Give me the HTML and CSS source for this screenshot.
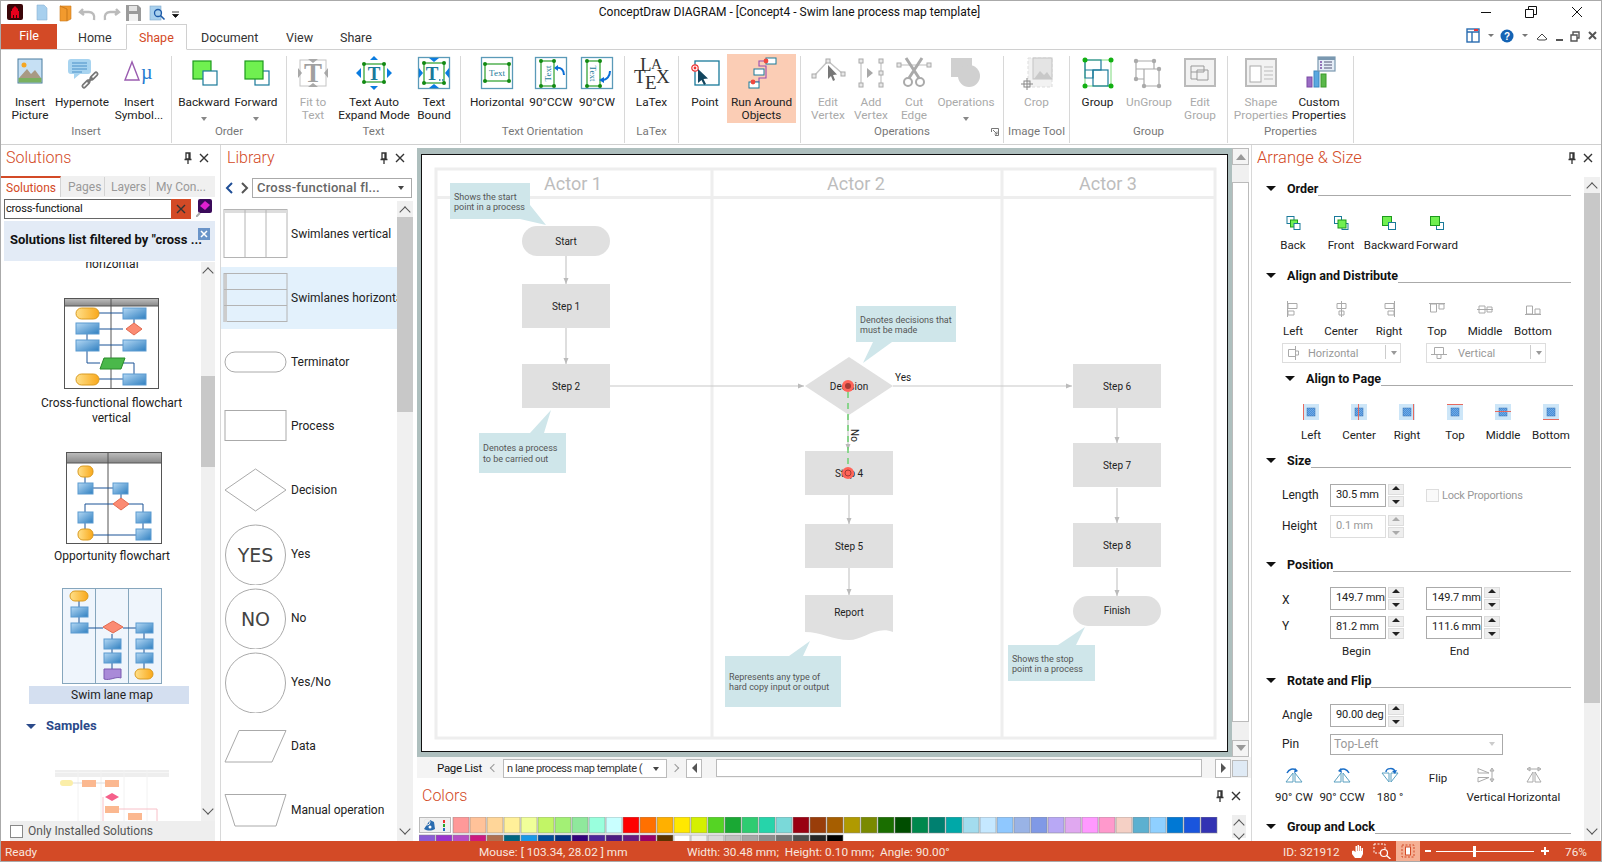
FILE: index.html
```html
<!DOCTYPE html>
<html>
<head>
    <title>ConceptDraw DIAGRAM</title>
    <link rel="stylesheet" href="styles.css">
</head>
<body>
<!-- shared icon parts -->
<svg class="defs" width="0" height="0">
    <defs>
        <linearGradient id="gBlue" x1="0" y1="0" x2="1" y2="1"><stop offset="0" stop-color="#b4d8f4"/><stop offset="1" stop-color="#2f7fc0"/></linearGradient>
        <linearGradient id="gPill" x1="0" y1="0" x2="1" y2="0"><stop offset="0" stop-color="#ffe08a"/><stop offset="1" stop-color="#f9a81a"/></linearGradient>
        <linearGradient id="gHead" x1="0" y1="0" x2="0" y2="1"><stop offset="0" stop-color="#bbb"/><stop offset="1" stop-color="#888"/></linearGradient>
        <pattern id="hatch" width="2" height="2" patternUnits="userSpaceOnUse"><rect width="2" height="2" fill="#4a90d9"/><path d="M0 2l2-2" stroke="#8cbcec" stroke-width=".6"/></pattern>
        <symbol id="pin" viewBox="0 0 10 12"><path d="M3 1h4v6H3zM1.500 7.500h7M5 8v4M6 1v6" fill="none" stroke="#333" stroke-width="1.300"/></symbol>
        <symbol id="cross" viewBox="0 0 10 10"><path d="M1 1l8 8M9 1l-8 8" fill="none" stroke="#333" stroke-width="1.400"/></symbol>
        <symbol id="alignbox" viewBox="0 0 16 16"><rect width="16" height="16" fill="#cde6f8"/><rect x="4" y="4" width="8" height="8" fill="url(#hatch)" stroke="#3a70b0" stroke-width=".5"/></symbol>
    </defs>
</svg>

<div class="app">
    <!-- Title bar -->
    <div class="titlebar">
        <div class="qat">
            <svg width="180" height="20" viewBox="0 0 180 20">
                <rect x="6" y="1" width="16" height="16" rx="2" fill="#3a0508"/>
                <path d="M14 3l3 3v2h1v7h-2v-3h-1v3h-2v-3h-1v3h-2V8h1V6z" fill="#e8001c"/>
                <path d="M36 2h7l3 3v12H36z" fill="#a8d0ee" stroke="#8ab4d4" stroke-width=".6"/>
                <path d="M59 3h11v13l-4 2V6l-7-3zM59 3l7 3v12h-7z" fill="#f29a2e" stroke="#c9781c" stroke-width=".6"/>
                <path d="M82 6l-3 3 4 3M80 9h8c4 0 6 3 5 8" fill="none" stroke="#bbb" stroke-width="2.400"/>
                <path d="M115 6l3 3-4 3M117 9h-8c-4 0-6 3-5 8" fill="none" stroke="#bbb" stroke-width="2.400"/>
                <path d="M125 2h12l3 3v13h-15z" fill="#9b9b9b"/><rect x="128" y="3" width="8" height="5" fill="#e4e4e4"/><rect x="128" y="11" width="9" height="7" fill="#f2f2f2"/>
                <rect x="149" y="3" width="11" height="14" fill="#a8d0ee" stroke="#7fa9c9" stroke-width=".6"/><circle cx="157" cy="10" r="3.500" fill="none" stroke="#1c5aa8" stroke-width="1.300"/><path d="M159.500 12.500l4 4" stroke="#1c5aa8" stroke-width="1.600"/>
                <path d="M171 9h7M171.500 11.500h6l-3 3z" fill="#111" stroke="#111" stroke-width=".8"/>
            </svg>
        </div>
        <div class="doc-title">ConceptDraw DIAGRAM - [Concept4 - Swim lane process map template]</div>
        <div class="winctl">
            <svg width="120" height="20" viewBox="0 0 120 20">
                <path d="M0 9.500h10" stroke="#111"/>
                <path d="M44.500 6.500h8v8h-8zM47.500 6V3.500h8v8h-3" fill="none" stroke="#111"/>
                <path d="M91 4l10 10M101 4L91 14" stroke="#111"/>
            </svg>
        </div>
    </div>

    <!-- Ribbon tabs -->
    <div class="tabs">
        <div class="tab file">File</div>
        <div class="tab t-home">Home</div>
        <div class="tab active">Shape</div>
        <div class="tab t-doc">Document</div>
        <div class="tab t-view">View</div>
        <div class="tab">Share</div>
        <div class="tabs-right">
            <svg width="136" height="20" viewBox="0 0 136 20">
                <rect x="1" y="3" width="12" height="13" fill="#fff" stroke="#2a6cb0" stroke-width="1.400"/><path d="M1 6h12M6 6v10" stroke="#2a6cb0" stroke-width="1.400"/><rect x="8" y="3" width="4" height="2" fill="#e33"/>
                <path d="M22 8h6l-3 3z" fill="#777"/>
                <circle cx="41" cy="10" r="6.500" fill="#1463b4"/>
                <path d="M56 8h6l-3 3z" fill="#777"/>
                <path d="M71 13l5-5 5 5-2 1h-6z" fill="none" stroke="#444"/>
                <path d="M90 14h7" stroke="#555" stroke-width="2"/>
                <path d="M105 9h6v6h-6zM107 9V6h6v6h-2" fill="none" stroke="#555" stroke-width="1.400"/>
                <path d="M123 6l7 7M130 6l-7 7" stroke="#555" stroke-width="2"/>
                <text class="help-mark" x="41" y="14">?</text>
            </svg>
        </div>
    </div>

    <!-- Ribbon -->
    <div class="ribbon">
        <div class="rgroup g-insert">
            <div class="rbtns">
                <div class="rbtn">
                    <svg class="ricon" viewBox="0 0 36 32"><rect x="6" y="2" width="24" height="24" fill="#c6e0f4" stroke="#4a7ca0"/><circle cx="12" cy="8" r="2.500" fill="#f5a623"/><path d="M7 21l8-9 4 5 4-4 6 8z" fill="#a89a84"/><rect x="6.500" y="21" width="23" height="4.500" fill="#7ab060"/></svg>
                    <span>Insert<br>Picture</span>
                </div>
                <div class="rbtn">
                    <svg class="ricon" viewBox="0 0 36 32"><path d="M7 2h17a3 3 0 0 1 3 3v9a3 3 0 0 1-3 3H16l-6 5v-5H7a3 3 0 0 1-3-3V5a3 3 0 0 1 3-3z" fill="#a8d4f0"/><path d="M8 6h15M8 9h15M8 12h15M8 15h10" stroke="#4a90c8"/><path d="M20 29l4-4M28 21l4-4" stroke="#777" stroke-width="5" stroke-linecap="round"/><path d="M20 29l4-4M28 21l4-4" stroke="#fff" stroke-width="1.600" stroke-linecap="round"/><path d="M23.500 25.500l5-5" stroke="#777" stroke-width="2.600"/></svg>
                    <span>Hypernote</span>
                </div>
                <div class="rbtn">
                    <svg class="ricon" viewBox="0 0 36 32"><path d="M11 5L4 23h14z" fill="none" stroke="#9a5cb0" stroke-width="1.400"/><text class="sym-mu" x="20" y="22">µ</text></svg>
                    <span>Insert<br>Symbol...</span>
                </div>
            </div>
            <div class="rlabel">Insert</div>
        </div>
        <div class="rgroup g-order">
            <div class="rbtns">
                <div class="rbtn has-drop">
                    <svg class="ricon" viewBox="0 0 36 32"><rect x="7" y="4" width="18" height="18" fill="#70f050" stroke="#1d9a1d" stroke-width="1.200"/><rect x="17" y="14" width="14" height="14" fill="#fff" stroke="#1a7a9a" stroke-width="1.200"/></svg>
                    <span>Backward</span><i class="drop"></i>
                </div>
                <div class="rbtn has-drop">
                    <svg class="ricon" viewBox="0 0 36 32"><rect x="17" y="14" width="14" height="14" fill="#fff" stroke="#1a7a9a" stroke-width="1.200"/><rect x="7" y="4" width="18" height="18" fill="#70f050" stroke="#1d9a1d" stroke-width="1.200"/></svg>
                    <span>Forward</span><i class="drop"></i>
                </div>
            </div>
            <div class="rlabel">Order</div>
        </div>
        <div class="rgroup g-text">
            <div class="rbtns">
                <div class="rbtn off">
                    <svg class="ricon" viewBox="0 0 36 32"><rect x="5" y="3" width="26" height="26" fill="none" stroke="#c4c4c4"/><path d="M13 2h10l-5 4zM13 30h10l-5-4zM3 11v10l4-5zM33 11v10l-4-5z" fill="#a8a8a8"/><text class="t-big gray" x="18" y="25">T</text></svg>
                    <span>Fit to<br>Text</span>
                </div>
                <div class="rbtn">
                    <svg class="ricon" viewBox="0 0 36 32"><rect x="8" y="7" width="20" height="18" fill="none" stroke="#3aa63a" stroke-width="1.300"/><path d="M14 3h8l-4-4zM14 29h8l-4 4zM5 11v10l-5-5zM31 11v10l5-5z" fill="#0a7ce0"/><g fill="#128a12"><circle cx="8" cy="7" r="2"/><circle cx="28" cy="7" r="2"/><circle cx="8" cy="25" r="2"/><circle cx="28" cy="25" r="2"/></g><text class="t-mid" x="18" y="23">T</text></svg>
                    <span>Text Auto<br>Expand Mode</span>
                </div>
                <div class="rbtn">
                    <svg class="ricon" viewBox="0 0 36 32"><rect x="2.500" y=".5" width="31" height="31" fill="none" stroke="#5a9ab8" stroke-width="1.300"/><rect x="8" y="6" width="20" height="20" fill="none" stroke="#3aa63a" stroke-width="1.300"/><path d="M13 1h10l-5 4zM13 31h10l-5-4zM3 11v10l4-5zM33 11v10l-4-5z" fill="#0a7ce0"/><g fill="#128a12"><circle cx="8" cy="6" r="2"/><circle cx="28" cy="6" r="2"/><circle cx="8" cy="26" r="2"/><circle cx="28" cy="26" r="2"/></g><text class="t-mid" x="16" y="23">T</text><path d="M23 23h1.500M26 23h1.500" stroke="#1a7a9a" stroke-width="1.500"/></svg>
                    <span>Text<br>Bound</span>
                </div>
            </div>
            <div class="rlabel">Text</div>
        </div>
        <div class="rgroup g-orient">
            <div class="rbtns">
                <div class="rbtn">
                    <svg class="ricon" viewBox="0 0 36 32"><rect x="2.500" y=".5" width="31" height="31" fill="none" stroke="#5a9ab8" stroke-width="1.300"/><rect x="6" y="7" width="24" height="17" fill="none" stroke="#3aa63a" stroke-width="1.300"/><g fill="#128a12"><circle cx="6" cy="7" r="2"/><circle cx="30" cy="7" r="2"/><circle cx="6" cy="24" r="2"/><circle cx="30" cy="24" r="2"/></g><text class="t-txt" x="18" y="19">Text</text></svg>
                    <span>Horizontal</span>
                </div>
                <div class="rbtn">
                    <svg class="ricon" viewBox="0 0 36 32"><rect x="2.500" y=".5" width="31" height="31" fill="none" stroke="#5a9ab8" stroke-width="1.300"/><rect x="8" y="4" width="13" height="25" fill="none" stroke="#3aa63a" stroke-width="1.300"/><g fill="#128a12"><circle cx="8" cy="4" r="2"/><circle cx="21" cy="4" r="2"/><circle cx="8" cy="29" r="2"/><circle cx="21" cy="29" r="2"/></g><text class="t-txt" transform="translate(18 16.500) rotate(-90)">Text</text><path d="M23 11c5-1 8 2 8 7" fill="none" stroke="#0a6ed8" stroke-width="2"/><path d="M21 11l4-3v6z" fill="#0a6ed8"/></svg>
                    <span>90°CCW</span>
                </div>
                <div class="rbtn">
                    <svg class="ricon" viewBox="0 0 36 32"><rect x="2.500" y=".5" width="31" height="31" fill="none" stroke="#5a9ab8" stroke-width="1.300"/><rect x="8" y="4" width="13" height="25" fill="none" stroke="#3aa63a" stroke-width="1.300"/><g fill="#128a12"><circle cx="8" cy="4" r="2"/><circle cx="21" cy="4" r="2"/><circle cx="8" cy="29" r="2"/><circle cx="21" cy="29" r="2"/></g><text class="t-txt" transform="translate(11 16.500) rotate(90)">Text</text><path d="M31 14c0 5-3 9-8 9" fill="none" stroke="#0a6ed8" stroke-width="2"/><path d="M20 23l5-3v6z" fill="#0a6ed8"/></svg>
                    <span>90°CW</span>
                </div>
            </div>
            <div class="rlabel">Text Orientation</div>
        </div>
        <div class="rgroup g-latex">
            <div class="rbtns">
                <div class="rbtn">
                    <svg class="ricon" viewBox="0 0 36 32"><text class="tex" x="6" y="14">L</text><text class="tex small" x="17" y="12">A</text><text class="tex" x="0" y="26">T</text><text class="tex" x="11" y="32">E</text><text class="tex" x="22" y="26">X</text></svg>
                    <span>LaTex</span>
                </div>
            </div>
            <div class="rlabel">LaTex</div>
        </div>
        <div class="rgroup g-arrow">
            <div class="rbtns">
                <div class="rbtn">
                    <svg class="ricon" viewBox="0 0 36 32"><rect x="8" y="4" width="24" height="24" fill="none" stroke="#1a7a9a" stroke-width="1.300"/><circle cx="8" cy="11" r="3.200" fill="#fff" stroke="#e33" stroke-width="1.200"/><circle cx="8" cy="11" r="1.400" fill="#e33"/><path d="M11 12v14l3.500-3 2.500 5 2-1-2.500-5 4.500-.5z" fill="#12455e"/></svg>
                    <span>Point</span>
                </div>
                <div class="rbtn selected">
                    <svg class="ricon" viewBox="0 0 36 32"><path d="M22 4h-7v5h7v12h-7v4H9" fill="none" stroke="#9a4cb0" stroke-width="1.100"/><rect x="22" y="1" width="10" height="6" fill="#fff" stroke="#1a7a9a"/><rect x="10" y="12" width="10" height="6" fill="#fff" stroke="#1a7a9a"/><rect x="5" y="25" width="10" height="6" fill="#fff" stroke="#1a7a9a"/><circle cx="22" cy="4" r="2.400" fill="#f0483e"/><circle cx="9" cy="25" r="2.400" fill="#f0483e"/></svg>
                    <span>Run Around<br>Objects</span>
                </div>
            </div>
            <div class="rlabel"></div>
        </div>
        <div class="rgroup g-ops">
            <div class="rbtns">
                <div class="rbtn off">
                    <svg class="ricon" viewBox="0 0 36 32"><path d="M4 19L18 4l15 13" fill="none" stroke="#c4c4c4" stroke-width="1.400"/><g fill="#e8e8e8" stroke="#aaa"><rect x="2" y="17" width="4" height="4"/><rect x="16" y="2" width="4" height="4"/><rect x="31" y="15" width="4" height="4"/></g><path d="M18 8v14l3-3 2 5 2-1-2-5 4-.5z" fill="#777"/></svg>
                    <span>Edit<br>Vertex</span>
                </div>
                <div class="rbtn off">
                    <svg class="ricon" viewBox="0 0 36 32"><path d="M8 4v24M28 4v24" stroke="#ccc" stroke-width="1.400"/><g fill="#e8e8e8" stroke="#aaa"><rect x="6" y="2" width="4" height="4"/><rect x="6" y="26" width="4" height="4"/><rect x="26" y="2" width="4" height="4"/><rect x="26" y="14" width="4" height="4"/><rect x="26" y="26" width="4" height="4"/></g><path d="M14 11v10l6-5z" fill="#a8a8a8"/></svg>
                    <span>Add<br>Vertex</span>
                </div>
                <div class="rbtn off">
                    <svg class="ricon" viewBox="0 0 36 32"><path d="M3 8h30" stroke="#bbb"/><g fill="#e8e8e8" stroke="#aaa"><rect x="1" y="6" width="4" height="4"/><rect x="31" y="6" width="4" height="4"/></g><path d="M10 1l13 20M26 1L13 21" stroke="#aaa" stroke-width="3"/><circle cx="12" cy="25" r="4" fill="none" stroke="#aaa" stroke-width="2"/><circle cx="24" cy="25" r="4" fill="none" stroke="#aaa" stroke-width="2"/></svg>
                    <span>Cut<br>Edge</span>
                </div>
                <div class="rbtn off has-drop">
                    <svg class="ricon" viewBox="0 0 36 32"><path d="M3 1h21v11H3z" fill="#d0d0d0"/><circle cx="21" cy="19" r="11" fill="#d0d0d0"/><path d="M3 12h12v8H3z" fill="#d0d0d0"/></svg>
                    <span>Operations</span><i class="drop"></i>
                </div>
            </div>
            <div class="rlabel">Operations</div>
            <svg class="launcher" width="8" height="8" viewBox="0 0 8 8"><path d="M.5 4V.5H7.500V7.500H4M2 2l4 4M6 3.500V6H3.500" fill="none" stroke="#777"/></svg>
        </div>
        <div class="rgroup g-image">
            <div class="rbtns">
                <div class="rbtn off">
                    <svg class="ricon" viewBox="0 0 36 32"><rect x="9" y="1" width="24" height="29" fill="#f2f2f2" stroke="#ddd" stroke-dasharray="3 2"/><rect x="14" y="1" width="19" height="21" fill="#e4e4e4" stroke="#c4c4c4"/><path d="M15 22l6-8 4 4 3-3 5 7z" fill="#c8c8c8"/><rect x="5" y="24" width="6" height="6" fill="none" stroke="#888"/><path d="M8 21v12M2 27h12" stroke="#888"/></svg>
                    <span>Crop</span>
                </div>
            </div>
            <div class="rlabel">Image Tool</div>
        </div>
        <div class="rgroup g-group">
            <div class="rbtns">
                <div class="rbtn">
                    <svg class="ricon" viewBox="0 0 36 32"><rect x="5" y="3" width="26" height="26" fill="none" stroke="#7cd97c"/><path d="M5 3h16v10H5zM5 13h8v8H5z" fill="none" stroke="#1a7a9a" stroke-width="1.200"/><rect x="13" y="13" width="15" height="16" fill="none" stroke="#1a7a9a" stroke-width="1.200"/><g fill="#12b012"><circle cx="5" cy="3" r="2.500"/><circle cx="31" cy="3" r="2.500"/><circle cx="5" cy="29" r="2.500"/><circle cx="31" cy="29" r="2.500"/></g></svg>
                    <span>Group</span>
                </div>
                <div class="rbtn off">
                    <svg class="ricon" viewBox="0 0 36 32"><path d="M5 4h18v8H5zM5 12v10h8M13 12h15v17H13z" fill="none" stroke="#aaa" stroke-width="1.200"/><g fill="#aaa"><circle cx="5" cy="4" r="2.200"/><circle cx="23" cy="4" r="2.200"/><circle cx="5" cy="22" r="2.200"/><circle cx="28" cy="12" r="2.200"/><circle cx="13" cy="29" r="2.200"/><circle cx="28" cy="29" r="2.200"/></g></svg>
                    <span>UnGroup</span>
                </div>
                <div class="rbtn off">
                    <svg class="ricon" viewBox="0 0 36 32"><rect x="3" y="2" width="30" height="27" fill="#f2f2f2" stroke="#bbb" stroke-width="2"/><path d="M9 9h13v6H9zM9 15v7h6M15 13h11v10H15z" fill="none" stroke="#999"/></svg>
                    <span>Edit<br>Group</span>
                </div>
            </div>
            <div class="rlabel">Group</div>
        </div>
        <div class="rgroup g-props">
            <div class="rbtns">
                <div class="rbtn off">
                    <svg class="ricon" viewBox="0 0 36 32"><rect x="3" y="2" width="30" height="27" fill="#f2f2f2" stroke="#bbb" stroke-width="2"/><rect x="7" y="9" width="11" height="16" fill="#fff" stroke="#aaa"/><path d="M21 10h9M21 14h9M21 18h9M21 22h9" stroke="#bbb"/></svg>
                    <span>Shape<br>Properties</span>
                </div>
                <div class="rbtn">
                    <svg class="ricon" viewBox="0 0 36 32"><rect x="6" y="20" width="5" height="10" fill="#9b6cc4" stroke="#7a4aa4"/><rect x="13" y="14" width="5" height="16" fill="#5aa8e0" stroke="#3a88c0"/><rect x="20" y="17" width="5" height="13" fill="#5ab84a" stroke="#3a9a2a"/><rect x="17" y="0" width="17" height="14" fill="#e4ecf6" stroke="#7a98b0" stroke-width="1.200"/><rect x="17" y="0" width="17" height="3" fill="#7a98b0"/><path d="M19 5h2M19 8h2M19 11h2" stroke="#7a4aa4" stroke-width="1.500"/><path d="M23 5h8M23 8h8M23 11h8" stroke="#557"/></svg>
                    <span>Custom<br>Properties</span>
                </div>
            </div>
            <div class="rlabel">Properties</div>
        </div>
    </div>

    <!-- Main work area -->
    <div class="main">
        <!-- Solutions panel -->
        <div class="panel solutions">
            <div class="panel-head">
                <span class="panel-title">Solutions</span>
                <svg class="pin" width="10" height="12"><use href="#pin"/></svg>
                <svg class="close" width="10" height="10"><use href="#cross"/></svg>
            </div>
            <div class="side-tabs">
                <div class="side-tab active">Solutions</div>
                <div class="side-tab t-pages">Pages</div>
                <div class="side-tab t-layers">Layers</div>
                <div class="side-tab last">My Con...</div>
            </div>
            <div class="search">
                <div class="search-box">cross-functional</div>
                <div class="search-clear"><svg width="10" height="10"><use href="#cross"/></svg></div>
                <svg class="search-go" width="16" height="18" viewBox="0 0 16 18"><rect x="2" y="0" width="14" height="14" rx="2" fill="#3a0a5a"/><path d="M9 2l5 4-5 5-5-4z" fill="#e020d0"/><path d="M0 18l4-4" stroke="#aaa" stroke-width="2"/></svg>
            </div>
            <div class="banner">
                <span>Solutions list filtered by "cross ...</span>
                <svg class="banner-x" width="12" height="12" viewBox="0 0 12 12"><rect width="12" height="12" fill="#6a94c8"/><path d="M3 3l6 6M9 3l-6 6" stroke="#fff" stroke-width="1.500"/></svg>
            </div>
            <div class="sol-body">
                <div class="sol-list">
                    <div class="sol-cut">horizontal</div>
                    <svg class="thumb t1" width="96" height="92" viewBox="0 0 96 92">
                        <rect x=".5" y=".5" width="94" height="90" fill="#fff" stroke="#555"/><rect x="1" y="1" width="93" height="7" fill="url(#gHead)"/><path d="M47 1v90M1 8h93" stroke="#555"/>
                        <path d="M35 15h24M70 21v4M59 31H35M23 36v6M59 47H35M23 53v12h13M57 65h13v11M59 81H35" fill="none" stroke="#1a5296"/>
                        <rect x="12" y="10" width="23" height="11" rx="5.500" fill="url(#gPill)" stroke="#d99a20"/><rect x="59" y="10" width="23" height="11" fill="url(#gBlue)" stroke="#5a9ad0"/>
                        <rect x="12" y="25" width="23" height="11" fill="url(#gBlue)" stroke="#5a9ad0"/><path d="M62 31l8-6 8 6-8 6z" fill="#fb8b73" stroke="#e06a50"/>
                        <rect x="12" y="42" width="23" height="11" fill="url(#gBlue)" stroke="#5a9ad0"/><rect x="59" y="42" width="23" height="11" fill="url(#gBlue)" stroke="#5a9ad0"/>
                        <path d="M40 60h21l-4 11H36z" fill="#4ab84a" stroke="#2a8a2a"/>
                        <rect x="12" y="76" width="23" height="11" rx="5.500" fill="url(#gPill)" stroke="#d99a20"/><rect x="59" y="76" width="23" height="11" fill="url(#gBlue)" stroke="#5a9ad0"/>
                    </svg>
                    <div class="sol-name">Cross-functional flowchart<br>vertical</div>
                    <svg class="thumb t2" width="97" height="92" viewBox="0 0 97 92">
                        <rect x=".5" y=".5" width="95" height="91" fill="#fff" stroke="#555"/><rect x="1" y="1" width="94" height="10" fill="url(#gHead)"/><path d="M42 1v91M1 11h95" stroke="#555"/>
                        <path d="M19 25v6M27 36h20M55 42v4M47 52H19v8M63 52h14v8M19 71v6M77 71v6M70 83H27" fill="none" stroke="#1a5296"/>
                        <rect x="12" y="14" width="15" height="11" rx="5" fill="url(#gPill)" stroke="#d99a20"/><rect x="12" y="31" width="15" height="11" fill="url(#gBlue)" stroke="#5a9ad0"/><rect x="47" y="31" width="15" height="11" fill="url(#gBlue)" stroke="#5a9ad0"/>
                        <path d="M47 52l8-6 8 6-8 6z" fill="#fb8b73" stroke="#e06a50"/><rect x="12" y="60" width="15" height="11" fill="url(#gBlue)" stroke="#5a9ad0"/><rect x="70" y="60" width="15" height="11" fill="url(#gBlue)" stroke="#5a9ad0"/>
                        <rect x="12" y="77" width="15" height="11" rx="5" fill="url(#gPill)" stroke="#d99a20"/><rect x="70" y="77" width="15" height="11" fill="url(#gBlue)" stroke="#5a9ad0"/>
                    </svg>
                    <div class="sol-name one">Opportunity flowchart</div>
                    <svg class="thumb t3" width="101" height="96" viewBox="0 0 101 96">
                        <rect x=".5" y=".5" width="99" height="95" fill="#eff5fc" stroke="#86a6bd"/><path d="M33.500 1v94M66.500 1v94" stroke="#86a6bd"/>
                        <path d="M17 13v6M17 29v6M26 40h15M61 40h13M50 46v5M50 61v4M50 75v6M82 45v6M82 61v4M82 75v6" fill="none" stroke="#1a5296"/>
                        <rect x="8" y="3" width="18" height="10" rx="5" fill="url(#gPill)" stroke="#d99a20"/><rect x="9" y="19" width="17" height="10" fill="url(#gBlue)" stroke="#5a9ad0"/><rect x="9" y="35" width="17" height="10" fill="url(#gBlue)" stroke="#5a9ad0"/>
                        <path d="M41 39l10-6 10 6-10 6z" fill="#fb8b73" stroke="#e06a50"/>
                        <rect x="42" y="51" width="17" height="10" fill="url(#gBlue)" stroke="#5a9ad0"/><rect x="42" y="65" width="17" height="10" fill="url(#gBlue)" stroke="#5a9ad0"/><path d="M42 81h17v9c-5-2-11 3-17 1z" fill="#a98ad8" stroke="#7a5ab0"/>
                        <rect x="74" y="35" width="17" height="10" fill="url(#gBlue)" stroke="#5a9ad0"/><rect x="74" y="51" width="17" height="10" fill="url(#gBlue)" stroke="#5a9ad0"/><rect x="74" y="65" width="17" height="10" fill="url(#gBlue)" stroke="#5a9ad0"/><rect x="73" y="81" width="18" height="10" rx="5" fill="url(#gPill)" stroke="#d99a20"/>
                    </svg>
                    <div class="sol-name picked">Swim lane map</div>
                    <div class="samples"><i class="tri blue"></i>Samples</div>
                    <svg class="thumb t4" width="114" height="52" viewBox="0 0 114 52">
                        <path d="M0 .5h114M0 5h114" stroke="#eee" stroke-width="4"/><path d="M23 0v52M46 0v52M69 0v52M92 0v52" stroke="#f2f2f2"/>
                        <rect x="5" y="10" width="13" height="6" rx="3" fill="#fbeea8"/><path d="M18 13h9M41 13h9" stroke="#ddd"/><rect x="27" y="10" width="14" height="7" fill="#fbb890"/><rect x="50" y="10" width="14" height="7" fill="#fbb890"/>
                        <path d="M50 27l7-4 7 4-7 4z" fill="#f5608a"/><rect x="50" y="36" width="14" height="7" fill="#fbb890"/><rect x="73" y="43" width="14" height="7" fill="#fbb890"/><path d="M64 39h38v13M48 27v25" fill="none" stroke="#f8c0c8"/>
                    </svg>
                </div>
                <div class="scrollbar sol-scroll"><i class="arrow-up"></i><b class="thumb-bar"></b><i class="arrow-down"></i></div>
            </div>
            <div class="only-installed"><i class="checkbox"></i>Only Installed Solutions</div>
        </div>

        <!-- Library panel -->
        <div class="panel library">
            <div class="panel-head">
                <span class="panel-title">Library</span>
                <svg class="pin" width="10" height="12"><use href="#pin"/></svg>
                <svg class="close" width="10" height="10"><use href="#cross"/></svg>
            </div>
            <div class="lib-nav">
                <svg width="24" height="12" viewBox="0 0 24 12"><path d="M7 1L2 6l5 5" fill="none" stroke="#1f4e96" stroke-width="2"/><path d="M17 1l5 5-5 5" fill="none" stroke="#555" stroke-width="2"/></svg>
                <div class="lib-select">Cross-functional fl...<i class="mini-drop"></i></div>
            </div>
            <div class="lib-body">
                <div class="lib-list">
                    <div class="lib-item">
                        <svg width="66" height="50" viewBox="0 0 66 50"><rect x="1" y=".5" width="63" height="48" fill="#fff" stroke="#b4b4b4"/><rect x="1" y="1" width="63" height="3" fill="#ddd"/><path d="M22 1v48M43 1v48" stroke="#b4b4b4"/></svg>
                        <span>Swimlanes vertical</span>
                    </div>
                    <div class="lib-item hot">
                        <svg width="66" height="50" viewBox="0 0 66 50"><rect x="1" y=".5" width="63" height="48" fill="none" stroke="#b4b4b4"/><rect x="1" y="1" width="3" height="48" fill="#ccc"/><path d="M1 16.500h63M1 32.500h63" stroke="#b4b4b4"/></svg>
                        <span>Swimlanes horizontal</span>
                    </div>
                    <div class="lib-item">
                        <svg width="66" height="50" viewBox="0 0 66 50"><rect x="2" y="15" width="61" height="20" rx="10" fill="#fff" stroke="#aaa"/></svg>
                        <span>Terminator</span>
                    </div>
                    <div class="lib-item">
                        <svg width="66" height="50" viewBox="0 0 66 50"><rect x="2" y="9.500" width="61" height="30" fill="#fff" stroke="#aaa"/></svg>
                        <span>Process</span>
                    </div>
                    <div class="lib-item">
                        <svg width="66" height="50" viewBox="0 0 66 50"><path d="M2 25L32.500 4 63 25 32.500 46z" fill="#fff" stroke="#aaa"/></svg>
                        <span>Decision</span>
                    </div>
                    <div class="lib-item">
                        <svg width="66" height="62" viewBox="0 -1 66 62"><circle cx="32.500" cy="31" r="30" fill="#fff" stroke="#aaa"/><text class="lib-big" x="32.500" y="38">YES</text></svg>
                        <span>Yes</span>
                    </div>
                    <div class="lib-item">
                        <svg width="66" height="62" viewBox="0 -1 66 62"><circle cx="32.500" cy="31" r="30" fill="#fff" stroke="#aaa"/><text class="lib-big" x="32.500" y="38">NO</text></svg>
                        <span>No</span>
                    </div>
                    <div class="lib-item">
                        <svg width="66" height="62" viewBox="0 -1 66 62"><circle cx="32.500" cy="31" r="30" fill="#fff" stroke="#aaa"/></svg>
                        <span>Yes/No</span>
                    </div>
                    <div class="lib-item">
                        <svg width="66" height="50" viewBox="0 0 66 50"><path d="M16 9.500h47L49 41H2z" fill="#fff" stroke="#aaa"/></svg>
                        <span>Data</span>
                    </div>
                    <div class="lib-item">
                        <svg width="66" height="50" viewBox="0 0 66 50"><path d="M2 9.500h61L53 41H12z" fill="#fff" stroke="#aaa"/></svg>
                        <span>Manual operation</span>
                    </div>
                </div>
                <div class="scrollbar lib-scroll"><i class="arrow-up"></i><b class="thumb-bar"></b><i class="arrow-down"></i></div>
            </div>
        </div>

        <!-- Document area -->
        <div class="center">
            <div class="doc">
                <div class="canvas">
                    <svg class="page" width="805" height="596" viewBox="422 155 805 596">
                        <!-- swim lanes -->
                        <rect x="436" y="169" width="779" height="569" fill="#fff" stroke="#eee" stroke-width="3"/>
                        <path d="M436 197.500h779M712 169v569M1002 169v569" stroke="#eee" stroke-width="3"/>
                        <text class="actor" x="573" y="190">Actor 1</text>
                        <text class="actor" x="856" y="190">Actor 2</text>
                        <text class="actor" x="1108" y="190">Actor 3</text>

                        <!-- connectors -->
                        <g class="link">
                            <path d="M566 256v28M566 328v36M610 386h194M893 386h179M848 415v35M1117 408v35M1117 488v35M1117 568v28M849 495v29M849 568v27"/>
                        </g>
                        <g class="link-head">
                            <path d="M563.500 278h5l-2.500 6zM563.500 358h5l-2.500 6zM798 383.500v5l6-2.500zM1066 383.500v5l6-2.500zM845.500 444h5l-2.500 6zM1114.500 437h5l-2.500 6zM1114.500 517h5l-2.500 6zM1114.500 590h5l-2.500 6zM846.500 518h5l-2.500 6zM846.500 589h5l-2.500 6z"/>
                        </g>

                        <!-- flow shapes -->
                        <g class="node">
                            <rect x="522" y="226" width="88" height="30" rx="15"/>
                            <rect x="522" y="284" width="88" height="44"/>
                            <rect x="522" y="364" width="88" height="44"/>
                            <path d="M805 386l44-29 44 29-44 29z"/>
                            <rect x="805" y="451" width="88" height="44"/>
                            <rect x="805" y="524" width="88" height="44"/>
                            <path d="M805 595h88v37c-16-7-30 8-44 8-16 0-28-8-44-8z"/>
                            <rect x="1073" y="364" width="88" height="44"/>
                            <rect x="1073" y="443" width="88" height="44"/>
                            <rect x="1073" y="523" width="88" height="44"/>
                            <rect x="1073" y="596" width="88" height="30" rx="15"/>
                        </g>
                        <g class="node-text">
                            <text x="566" y="245">Start</text>
                            <text x="566" y="310">Step 1</text>
                            <text x="566" y="390">Step 2</text>
                            <text x="849" y="390">Decision</text>
                            <text x="849" y="477">Step 4</text>
                            <text x="849" y="550">Step 5</text>
                            <text x="849" y="616">Report</text>
                            <text x="1117" y="390">Step 6</text>
                            <text x="1117" y="469">Step 7</text>
                            <text x="1117" y="549">Step 8</text>
                            <text x="1117" y="614">Finish</text>
                        </g>
                        <text class="edge-text" x="895" y="381">Yes</text>
                        <text class="edge-text" transform="translate(851 429) rotate(90)">No</text>

                        <!-- callouts -->
                        <g class="note">
                            <path d="M450 183h80v22l16 20-26-6h-70z"/>
                            <path d="M479 433h51l21-23-7 23h22v40h-87z"/>
                            <path d="M856 306h100v36h-64l-29 21 10-21h-17z"/>
                            <path d="M725 656h64l21-15-7 15h38v51H725z"/>
                            <path d="M1008 645h50l27-18-9 18h19v36h-87z"/>
                        </g>
                        <g class="note-text">
                            <text x="454" y="200">Shows the start</text>
                            <text x="454" y="210">point in a process</text>
                            <text x="483" y="451">Denotes a process</text>
                            <text x="483" y="462">to be carried out</text>
                            <text x="860" y="323">Denotes decisions that</text>
                            <text x="860" y="333">must be made</text>
                            <text x="729" y="680">Represents any type of</text>
                            <text x="729" y="690">hard copy input or output</text>
                            <text x="1012" y="662">Shows the stop</text>
                            <text x="1012" y="672">point in a process</text>
                        </g>

                        <!-- selected connector and its end points -->
                        <path class="sel-line" d="M848 392v72"/>
                        <circle class="sel-dot" cx="848" cy="386" r="6"/><circle class="sel-core" cx="848" cy="386" r="3"/>
                        <circle class="sel-dot" cx="848" cy="473" r="6"/><circle class="sel-ring" cx="848" cy="473" r="3"/>
                    </svg>
                </div>
                <div class="scrollbar doc-scroll"><i class="sq-btn up"></i><b class="doc-track"></b><i class="sq-btn down"></i></div>
            </div>
            <div class="page-row">
                <span class="page-list">Page List</span>
                <i class="chev left"></i>
                <div class="page-select"><span>n lane process map template (</span><i class="mini-drop dark"></i></div>
                <i class="chev right"></i>
                <i class="hs-btn"><b class="ar-l"></b></i>
                <div class="hs-track"></div>
                <i class="hs-btn"><b class="ar-r"></b></i>
                <i class="hs-corner"></i>
            </div>
            <div class="colors">
                <div class="panel-head">
                    <span class="panel-title">Colors</span>
                    <svg class="pin" width="10" height="12"><use href="#pin"/></svg>
                    <svg class="close" width="10" height="10"><use href="#cross"/></svg>
                </div>
                <div class="swatch-row">
                    <svg class="swatches" width="802" height="24" viewBox="1 0 802 24">
                        <rect x="1.500" y=".5" width="31" height="15" fill="#f0f0f0" stroke="#bbb"/>
                        <path d="M6 12l6-9 4 2 1 7c-4 2-7 2-11 0z" fill="#2a6cb0"/><circle cx="12" cy="10" r="1.500" fill="#fff"/><circle cx="9" cy="5" r="3" fill="none" stroke="#e8e8e8"/>
                        <rect x="25" y="3" width="2" height="3" fill="#e33"/><rect x="25" y="7" width="2" height="3" fill="#28a428"/><rect x="25" y="11" width="2" height="3" fill="#246ac0"/>
                        <g stroke="#888" stroke-opacity=".55" stroke-width="1">
                            <rect x="35" width="16" height="16" fill="#ff9999"/><rect x="52" width="16" height="16" fill="#ffc299"/><rect x="69" width="16" height="16" fill="#ffd699"/><rect x="86" width="16" height="16" fill="#fff099"/><rect x="103" width="16" height="16" fill="#f0ff99"/>
                            <rect x="120" width="16" height="16" fill="#c2f566"/><rect x="137" width="16" height="16" fill="#a3f075"/><rect x="154" width="16" height="16" fill="#8fe89c"/><rect x="171" width="16" height="16" fill="#99ffdd"/><rect x="188" width="16" height="16" fill="#c9ffff"/>
                            <rect x="205" width="16" height="16" fill="#ff0000"/><rect x="222" width="16" height="16" fill="#ff7000"/><rect x="239" width="16" height="16" fill="#ffb000"/><rect x="256" width="16" height="16" fill="#ffe800"/><rect x="273" width="16" height="16" fill="#d4f000"/>
                            <rect x="290" width="16" height="16" fill="#55d424"/><rect x="307" width="16" height="16" fill="#1aa834"/><rect x="324" width="16" height="16" fill="#2ecc71"/><rect x="341" width="16" height="16" fill="#26d4aa"/><rect x="358" width="16" height="16" fill="#7ad9d9"/>
                            <rect x="375" width="16" height="16" fill="#990011"/><rect x="392" width="16" height="16" fill="#993d0a"/><rect x="409" width="16" height="16" fill="#a65e00"/><rect x="426" width="16" height="16" fill="#b09a00"/><rect x="443" width="16" height="16" fill="#7a8a00"/>
                            <rect x="460" width="16" height="16" fill="#1a6e00"/><rect x="477" width="16" height="16" fill="#004d00"/><rect x="494" width="16" height="16" fill="#00884d"/><rect x="511" width="16" height="16" fill="#008070"/><rect x="528" width="16" height="16" fill="#00a8a8"/>
                            <rect x="545" width="16" height="16" fill="#a3dcee"/><rect x="562" width="16" height="16" fill="#c5e8ff"/><rect x="579" width="16" height="16" fill="#8fc8ff"/><rect x="596" width="16" height="16" fill="#99b3e6"/><rect x="613" width="16" height="16" fill="#8099e6"/>
                            <rect x="630" width="16" height="16" fill="#b8a8f5"/><rect x="647" width="16" height="16" fill="#e0a8f0"/><rect x="664" width="16" height="16" fill="#ff99ff"/><rect x="681" width="16" height="16" fill="#ff99cc"/><rect x="698" width="16" height="16" fill="#f5d0c5"/>
                            <rect x="715" width="16" height="16" fill="#5cb0d0"/><rect x="732" width="16" height="16" fill="#8fd0ff"/><rect x="749" width="16" height="16" fill="#0078d4"/><rect x="766" width="16" height="16" fill="#1a55dd"/><rect x="783" width="16" height="16" fill="#3333b3"/>
                            <rect y="18" x="1" width="16" height="8" fill="#8a5cd6"/><rect y="18" x="18" width="16" height="8" fill="#9933cc"/><rect y="18" x="35" width="16" height="8" fill="#b84dc4"/><rect y="18" x="52" width="16" height="8" fill="#cc1a80"/><rect y="18" x="69" width="16" height="8" fill="#b07050"/>
                            <rect y="18" x="86" width="16" height="8" fill="#006680"/><rect y="18" x="103" width="16" height="8" fill="#1a99e6"/><rect y="18" x="120" width="16" height="8" fill="#004d99"/><rect y="18" x="137" width="16" height="8" fill="#003380"/><rect y="18" x="154" width="16" height="8" fill="#33007a"/>
                            <rect y="18" x="171" width="16" height="8" fill="#4d2699"/><rect y="18" x="188" width="16" height="8" fill="#4d1a80"/><rect y="18" x="205" width="16" height="8" fill="#661a80"/><rect y="18" x="222" width="16" height="8" fill="#990066"/><rect y="18" x="239" width="16" height="8" fill="#5c3300"/>
                            <rect y="18" x="256" width="16" height="8" fill="#ffffff"/><rect y="18" x="273" width="16" height="8" fill="#f0f0f0"/><rect y="18" x="290" width="16" height="8" fill="#d9d9d9"/><rect y="18" x="307" width="16" height="8" fill="#bfbfbf"/><rect y="18" x="324" width="16" height="8" fill="#a6a6a6"/>
                            <rect y="18" x="341" width="16" height="8" fill="#8c8c8c"/><rect y="18" x="358" width="16" height="8" fill="#737373"/><rect y="18" x="375" width="16" height="8" fill="#4d4d4d"/><rect y="18" x="392" width="16" height="8" fill="#262626"/><rect y="18" x="409" width="16" height="8" fill="#000000"/>
                        </g>
                    </svg>
                    <div class="swatch-scroll"><i class="arrow-up"></i><i class="arrow-down"></i></div>
                </div>
            </div>
        </div>

        <!-- Arrange & Size panel -->
        <div class="panel arrange">
            <div class="panel-head">
                <span class="panel-title">Arrange &amp; Size</span>
                <svg class="pin" width="10" height="12"><use href="#pin"/></svg>
                <svg class="close" width="10" height="10"><use href="#cross"/></svg>
            </div>
            <div class="arr-body">
                <div class="arr-list">
                    <div class="sec-head first"><i class="tri"></i><b>Order</b><em></em></div>
                    <div class="tools mt19">
                        <div class="tool"><svg width="16" height="16" viewBox="0 0 16 16"><rect x="2" y="1.500" width="7" height="7" fill="#fff" stroke="#1a7a9a"/><rect x="5.500" y="5" width="7" height="7" fill="#70f050" stroke="#1d9a1d"/><rect x="9" y="8.500" width="6" height="6" fill="#fff" stroke="#1a7a9a"/></svg><span>Back</span></div>
                        <div class="tool"><svg width="16" height="16" viewBox="0 0 16 16"><rect x="1.500" y="1.500" width="7" height="7" fill="#fff" stroke="#1a7a9a"/><rect x="9" y="8.500" width="6" height="6" fill="#fff" stroke="#1a7a9a"/><rect x="5" y="5" width="8" height="8" fill="#70f050" stroke="#1d9a1d"/></svg><span>Front</span></div>
                        <div class="tool"><svg width="16" height="16" viewBox="0 0 16 16"><rect x="1.500" y="1.500" width="9" height="9" fill="#70f050" stroke="#1d9a1d"/><rect x="7.500" y="7.500" width="7" height="7" fill="#fff" stroke="#1a7a9a"/></svg><span>Backward</span></div>
                        <div class="tool"><svg width="16" height="16" viewBox="0 0 16 16"><rect x="7.500" y="7.500" width="7" height="7" fill="#fff" stroke="#1a7a9a"/><rect x="1.500" y="1.500" width="9" height="9" fill="#70f050" stroke="#1d9a1d"/></svg><span>Forward</span></div>
                    </div>

                    <div class="sec-head mt15"><i class="tri"></i><b>Align and Distribute</b><em></em></div>
                    <div class="tools mt18">
                        <div class="tool"><svg width="16" height="16" viewBox="0 0 16 16" class="gray-ico"><path d="M2.500 0v16M3 2.500h9v5H3zM3 10h6v4H3z"/></svg><span>Left</span></div>
                        <div class="tool"><svg width="16" height="16" viewBox="0 0 16 16" class="gray-ico"><path d="M8.500 0v16M4 2.500h9v5H4zM6 10h5v4H6z"/></svg><span>Center</span></div>
                        <div class="tool"><svg width="16" height="16" viewBox="0 0 16 16" class="gray-ico"><path d="M13.500 0v16M4 2.500h9v5H4zM7 10h6v4H7z"/></svg><span>Right</span></div>
                        <div class="tool"><svg width="16" height="16" viewBox="0 0 16 16" class="gray-ico"><path d="M0 2.500h16M1.500 3v8h6V3zM10 3v5h5V3z"/></svg><span>Top</span></div>
                        <div class="tool"><svg width="16" height="16" viewBox="0 0 16 16" class="gray-ico"><path d="M0 8.500h16M2 5v7h6V5zM10 6v5h5V6z"/></svg><span>Middle</span></div>
                        <div class="tool"><svg width="16" height="16" viewBox="0 0 16 16" class="gray-ico"><path d="M0 13.500h16M1.500 5v8h6V5zM10 8v5h5V8z"/></svg><span>Bottom</span></div>
                    </div>
                    <div class="dist-row">
                        <div class="dist"><svg width="16" height="14" viewBox="0 0 16 14" class="gray-ico"><path d="M8.500 0v14M1.500 3.500h7v7h-7zM8.500 5h3v4h-3z"/></svg><span>Horizontal</span><i class="mini-drop sep"></i></div>
                        <div class="dist d2"><svg width="16" height="14" viewBox="0 0 16 14" class="gray-ico"><path d="M0 8.500h16M3.500 1.500h9v7h-9zM6 8.500v4h4v-4z"/></svg><span>Vertical</span><i class="mini-drop sep"></i></div>
                    </div>

                    <div class="sec-head sub"><i class="tri"></i><b>Align to Page</b><em></em></div>
                    <div class="tools page-tools mt18">
                        <div class="tool"><svg width="16" height="16" viewBox="0 0 16 16"><use href="#alignbox"/><path d="M.5 0v16" class="red"/></svg><span>Left</span></div>
                        <div class="tool"><svg width="16" height="16" viewBox="0 0 16 16"><use href="#alignbox"/><path d="M7.500 0v16" class="red"/></svg><span>Center</span></div>
                        <div class="tool"><svg width="16" height="16" viewBox="0 0 16 16"><use href="#alignbox"/><path d="M14.500 0v16" class="red"/></svg><span>Right</span></div>
                        <div class="tool"><svg width="16" height="16" viewBox="0 0 16 16"><use href="#alignbox"/><path d="M0 .5h16" class="red"/></svg><span>Top</span></div>
                        <div class="tool"><svg width="16" height="16" viewBox="0 0 16 16"><use href="#alignbox"/><path d="M0 7.500h16" class="red"/></svg><span>Middle</span></div>
                        <div class="tool"><svg width="16" height="16" viewBox="0 0 16 16"><use href="#alignbox"/><path d="M0 15.500h16" class="red"/></svg><span>Bottom</span></div>
                    </div>

                    <div class="sec-head mt10"><i class="tri"></i><b>Size</b><em></em></div>
                    <div class="form-row mt16">
                        <label>Length</label><div class="field">30.5 mm</div><div class="spin"><i class="arrow-up"></i><i class="arrow-down"></i></div>
                        <i class="checkbox faint"></i><span class="lock">Lock Proportions</span>
                    </div>
                    <div class="form-row mt8">
                        <label>Height</label><div class="field off">0.1 mm</div><div class="spin off"><i class="arrow-up"></i><i class="arrow-down"></i></div>
                    </div>

                    <div class="sec-head mt18"><i class="tri"></i><b>Position</b><em></em></div>
                    <div class="form-row mt15">
                        <label class="lab-x">X</label><div class="field">149.7 mm</div><div class="spin"><i class="arrow-up"></i><i class="arrow-down"></i></div>
                        <div class="field second">149.7 mm</div><div class="spin"><i class="arrow-up"></i><i class="arrow-down"></i></div>
                    </div>
                    <div class="form-row mt6">
                        <label class="lab-y">Y</label><div class="field">81.2 mm</div><div class="spin"><i class="arrow-up"></i><i class="arrow-down"></i></div>
                        <div class="field second">111.6 mm</div><div class="spin"><i class="arrow-up"></i><i class="arrow-down"></i></div>
                    </div>
                    <div class="begin-end"><span>Begin</span><span>End</span></div>

                    <div class="sec-head mt14"><i class="tri"></i><b>Rotate and Flip</b><em></em></div>
                    <div class="form-row mt16">
                        <label>Angle</label><div class="field clip">90.00 deg</div><div class="spin"><i class="arrow-up"></i><i class="arrow-down"></i></div>
                    </div>
                    <div class="form-row pin-row">
                        <label>Pin</label><div class="pin-select">Top-Left<i class="mini-drop pale"></i></div>
                    </div>
                    <div class="tools rot-tools">
                        <div class="tool"><svg width="18" height="16" viewBox="0 0 18 16"><path d="M1 15l7-9v9zM10 6l7 9h-7z" fill="#fff" stroke="#5aa0c0"/><path d="M2 6c2-4 6-5 9-3" fill="none" stroke="#1a6ec8" stroke-width="1.500"/><path d="M13 4l-4 2 1-5z" fill="#1a6ec8"/></svg><span>90° CW</span></div>
                        <div class="tool"><svg width="18" height="16" viewBox="0 0 18 16"><path d="M1 15l7-9v9zM10 6l7 9h-7z" fill="#fff" stroke="#5aa0c0"/><path d="M16 6c-2-4-6-5-9-3" fill="none" stroke="#1a6ec8" stroke-width="1.500"/><path d="M5 4l4 2-1-5z" fill="#1a6ec8"/></svg><span>90° CCW</span></div>
                        <div class="tool"><svg width="18" height="16" viewBox="0 0 18 16"><path d="M1 6l7 9V6zM10 15l7-9h-7z" fill="#fff" stroke="#5aa0c0"/><path d="M5 5c0-4 8-5 9 0" fill="none" stroke="#1a6ec8" stroke-width="1.500"/><path d="M14 7l-3-3 5-1z" fill="#1a6ec8"/></svg><span>180 °</span></div>
                        <div class="tool flip"><span>Flip</span></div>
                        <div class="tool"><svg width="18" height="16" viewBox="0 0 18 16" class="gray-ico"><path d="M1 1.500l11 4.500H1zM1 15l11-4.500H1zM15 2v12M13 4l2-3 2 3zM13 12l2 3 2-3z"/></svg><span>Vertical</span></div>
                        <div class="tool"><svg width="18" height="16" viewBox="0 0 18 16" class="gray-ico"><path d="M8 5L2 15h6zM10 5l6 10h-6zM3 2h12M5 0L2 2l3 2zM13 0l3 2-3 2z"/></svg><span>Horizontal</span></div>
                    </div>

                    <div class="sec-head mt14"><i class="tri"></i><b>Group and Lock</b><em></em></div>
                </div>
                <div class="scrollbar arr-scroll"><i class="arrow-up"></i><b class="thumb-bar"></b><i class="arrow-down"></i></div>
            </div>
        </div>
    </div>

    <!-- Status bar -->
    <div class="statusbar">
        <span class="st-ready">Ready</span>
        <span class="st-mouse">Mouse: [ 103.34, 28.02 ] mm</span>
        <span class="st-size">Width: 30.48 mm;&nbsp; Height: 0.10 mm;&nbsp; Angle: 90.00°</span>
        <span class="st-id">ID: 321912</span>
        <svg class="st-hand" width="14" height="16" viewBox="0 0 14 16"><path d="M2 8v3l3 4h6l2-4V5h-1.500v3H11V3H9.500v5H9V2H7.500v6H7V3H5.500v6L3.500 7.500z" fill="#fff"/></svg>
        <svg class="st-zoom" width="18" height="16" viewBox="0 0 18 16"><path d="M1 1h11v9H1z" fill="none" stroke="#fff" stroke-dasharray="2 1.500"/><circle cx="11" cy="10" r="3.500" fill="#d34a26" stroke="#fff" stroke-width="1.200"/><path d="M13.500 12.500l4 3.500" stroke="#fff" stroke-width="1.400"/></svg>
        <div class="st-fit"><svg width="14" height="16" viewBox="0 0 14 16"><rect x="1" y="2" width="12" height="12" fill="none" stroke="#d34a26" stroke-dasharray="2 1.500"/><rect x="4.500" y="4" width="5" height="8" fill="#fff" stroke="#d34a26"/></svg></div>
        <div class="st-slider"><i class="minus"></i><div class="track"><b></b></div><i class="plus"></i></div>
        <span class="st-pct">76%</span>
    </div>
</div>
</body>
</html>
```

FILE: styles.css
```css
* { box-sizing: border-box; }
html, body { margin: 0; padding: 0; }
body {
    width: 1602px;
    height: 862px;
    overflow: hidden;
    background: #fff;
    color: #222;
    font-family: Roboto, "Open Sans", sans-serif;
    font-size: 12px;
}
.defs { position: absolute; }
i { display: block; font-style: normal; }

.app {
    width: 1602px;
    height: 862px;
    display: flex;
    flex-direction: column;
    border-top: 1px solid #aaa;
    border-left: 1px solid #aaa;
    border-right: 1px solid #aaa;
    border-bottom: 1px solid #aaa;
}

/* title bar */
.titlebar {
    height: 23px;
    flex: none;
    display: flex;
    align-items: center;
    position: relative;
}
.qat { height: 20px; }
.qat svg { display: block; }
.doc-title {
    position: absolute;
    left: 0;
    right: 23px;
    top: 4px;
    text-align: center;
    font-size: 12px;
    color: #111;
}
.winctl { margin-left: auto; margin-right: 0; height: 20px; }
.winctl svg { display: block; }

/* tabs */
.tabs {
    height: 26px;
    flex: none;
    display: flex;
    align-items: stretch;
    border-bottom: 1px solid #d0d0d0;
    font-size: 12.500px;
}
.tab {
    padding-left: 14px;
    line-height: 27px;
    color: #333;
    width: 58px;
}
.tab.file {
    width: 56px;
    padding-left: 0;
    text-align: center;
    background: #d34a26;
    color: #fff;
    height: 25px;
    line-height: 24px;
}
.tab.t-home { width: 69px; padding-left: 21px; }
.tab.active {
    width: 61px;
    color: #d34a26;
    border: 1px solid #d0d0d0;
    border-bottom: 1px solid #fff;
    background: #fff;
    height: 26px;
    padding-left: 12px;
    line-height: 26px;
}
.tab.t-doc { width: 85px; }
.tab.t-view { width: 54px; }
.tabs-right { margin-left: auto; margin-right: -1px; padding-top: 2px; }
.tabs-right svg { display: block; }
.help-mark { font: bold 10px "Liberation Sans", sans-serif; fill: #fff; text-anchor: middle; }

/* ribbon */
.ribbon {
    height: 95px;
    flex: none;
    display: flex;
    border-bottom: 1px solid #d0d0d0;
}
.rgroup {
    position: relative;
    height: 87px;
    margin-top: 6px;
    border-right: 1px solid #d8d8d8;
    display: flex;
    flex-direction: column;
    flex: none;
}
.rbtns { display: flex; height: 68px; }
.rbtn {
    flex: none;
    display: flex;
    flex-direction: column;
    align-items: center;
    text-align: center;
    line-height: 13px;
    font-size: 11.800px;
    color: #222;
    white-space: nowrap;
    padding-top: 1px;
    position: relative;
}
.rbtn.off { color: #aaa; }
.ricon { width: 36px; height: 32px; flex: none; margin-bottom: 7px; overflow: visible; }
.rbtn .drop {
    width: 0;
    height: 0;
    margin-top: 8px;
    border: 3px solid transparent;
    border-top: 4px solid #888;
}
.rbtn.selected { background: #fbcdb5; height: 69px; margin-top: -2px; padding-top: 3px; }
.rlabel {
    position: absolute;
    left: 0;
    right: 0;
    top: 68px;
    text-align: center;
    font-size: 11.500px;
    line-height: 14px;
    color: #777;
}
.launcher { position: absolute; right: 4px; top: 72px; }
.g-insert { width: 171px; padding-left: 3px; }
.g-insert .rbtn:nth-child(1) { width: 52px; }
.g-insert .rbtn:nth-child(2) { width: 52px; }
.g-insert .rbtn:nth-child(3) { width: 62px; }
.g-order { width: 115px; padding-left: 6px; }
.g-order .rbtn { width: 52px; }
.g-text { width: 174px; padding-left: 6px; }
.g-text .rbtn:nth-child(1) { width: 40px; }
.g-text .rbtn:nth-child(2) { width: 82px; }
.g-text .rbtn:nth-child(3) { width: 38px; }
.g-orient { width: 164px; padding-left: 8px; }
.g-orient .rbtn:nth-child(1) { width: 56px; }
.g-orient .rbtn:nth-child(2) { width: 52px; }
.g-orient .rbtn:nth-child(3) { width: 40px; }
.g-latex { width: 54px; }
.g-latex .rbtn { width: 53px; }
.g-arrow { width: 122px; padding-left: 4px; }
.g-arrow .rbtn:nth-child(1) { width: 44px; }
.g-arrow .rbtn:nth-child(2) { width: 69px; }
.g-ops { width: 203px; padding-left: 6px; }
.g-ops .rbtn:nth-child(1) { width: 42px; }
.g-ops .rbtn:nth-child(2) { width: 44px; }
.g-ops .rbtn:nth-child(3) { width: 42px; }
.g-ops .rbtn:nth-child(4) { width: 62px; }
.g-image { width: 66px; }
.g-image .rbtn { width: 65px; }
.g-group { width: 158px; padding-left: 3px; }
.g-group .rbtn:nth-child(1) { width: 49px; }
.g-group .rbtn:nth-child(2) { width: 54px; }
.g-group .rbtn:nth-child(3) { width: 48px; }
.g-props { width: 126px; padding-left: 4px; }
.g-props .rbtn { width: 58px; }

/* ribbon icon text */
.t-big { font: bold 27px "Liberation Serif", serif; text-anchor: middle; }
.t-big.gray { fill: #a0a0a0; }
.t-mid { font: bold 19px "Liberation Serif", serif; fill: #1a7a9a; text-anchor: middle; }
.t-txt { font: 9px "Liberation Serif", serif; fill: #1a7a9a; text-anchor: middle; }
.sym-mu { font: 20px "Liberation Serif", serif; fill: #1f7ad0; }
.tex { font: 19px "Liberation Serif", serif; fill: #333; }
.tex.small { font-size: 15px; }

/* main area */
.main {
    height: 696px;
    flex: none;
    display: flex;
}
.panel { display: flex; flex-direction: column; flex: none; }
.panel-head {
    height: 27px;
    flex: none;
    display: flex;
    align-items: flex-start;
    padding-top: 3px;
    position: relative;
}
.panel-head svg { margin-top: 4px; }
.panel-head .close { margin-top: 5px; }
.panel-title {
    font-size: 16px;
    line-height: 20px;
    font-weight: 300;
    color: #d34a26;
}
.panel-head .pin { margin-left: auto; }
.panel-head .close { margin-left: 6px; }

/* scrollbars */
.scrollbar {
    flex: none;
    background: #f0f0f0;
    display: flex;
    flex-direction: column;
    position: relative;
}
.arrow-up, .arrow-down {
    width: 0;
    height: 0;
    border: 4px solid transparent;
}
.scrollbar .arrow-up, .swatch-scroll .arrow-up, .scrollbar .arrow-down, .swatch-scroll .arrow-down {
    width: 8px;
    height: 8px;
    border: none;
    border-left: 1.500px solid #555;
    border-top: 1.500px solid #555;
    transform: rotate(45deg);
    margin: 7px auto 0;
    flex: none;
}
.scrollbar .arrow-down, .swatch-scroll .arrow-down {
    transform: rotate(225deg);
    margin: 0 auto 8px;
}
.thumb-bar { position: absolute; left: 0; right: 0; background: #c8c8c8; }
.scrollbar .arrow-down { margin-top: auto; }

/* solutions */
.solutions { width: 220px; border-right: 1px solid #d8d8d8; }
.solutions .panel-head { padding-left: 5px; padding-right: 11px; height: 31px; }
.side-tabs {
    height: 21px;
    flex: none;
    width: 214px;
    background: #f0f0f0;
    display: flex;
    color: #999;
    margin-bottom: 2px;
}
.side-tab {
    line-height: 20px;
    margin: 1px 0;
    white-space: nowrap;
    border-right: 1px solid #d4d4d4;
}
.side-tab.active {
    width: 60px;
    margin: 0;
    padding: 0 0 0 5px;
    background: #fff;
    color: #d34a26;
    border-top: 2px solid #d34a26;
    border-right: 1px solid #d4d4d4;
    line-height: 20px;
}
.side-tab.t-pages { width: 44px; padding-left: 7px; }
.side-tab.t-layers { width: 45px; padding-left: 6px; }
.side-tab.last { border: none; padding-left: 6px; }
.search {
    height: 20px;
    flex: none;
    display: flex;
    margin-left: 3px;
}
.search-box {
    width: 167px;
    height: 20px;
    border: 1px solid #666;
    border-right: none;
    line-height: 18px;
    padding-left: 1px;
    color: #111;
    font-size: 11px;
    letter-spacing: -.15px;
}
.search-clear {
    width: 20px;
    height: 20px;
    background: #d34a26;
    display: flex;
    align-items: center;
    justify-content: center;
}
.search-go { margin-left: 5px; }
.banner {
    height: 40px;
    flex: none;
    width: 211px;
    margin: 2px 0 1px 3px;
    background: #e3ebf6;
    position: relative;
    padding-left: 6px;
    line-height: 37px;
    font-size: 13px;
    font-weight: 700;
    color: #111;
    white-space: nowrap;
    overflow: hidden;
}
.banner-x { position: absolute; left: 194px; top: 7px; }
.sol-body { flex: 1; display: flex; min-height: 0; width: 214px; }
.sol-list { width: 200px; height: 100%; overflow: hidden; flex: none; }
.sol-cut { margin-top: -5px; text-align: center; line-height: 14px; padding-left: 22px; }
.thumb { display: block; }
.t1 { margin: 27px 0 0 63px; }
.sol-name { text-align: center; line-height: 15px; padding-left: 21px; margin-top: 6px; }
.sol-name.one { padding-left: 22px; margin-top: 5px; }
.t2 { margin: 26px 0 0 65px; }
.t3 { margin: 24px 0 0 61px; }
.sol-name.picked {
    width: 160px;
    height: 18px;
    margin: 2px 0 0 28px;
    padding: 0 0 0 6px;
    background: #d4dff0;
    line-height: 18px;
}
.samples {
    display: flex;
    align-items: center;
    font-size: 13px;
    font-weight: 700;
    color: #2b4a8a;
    margin: 14px 0 0 25px;
    line-height: 16px;
}
.tri {
    width: 0;
    height: 0;
    border-left: 5px solid transparent;
    border-right: 5px solid transparent;
    border-top: 5px solid #111;
    flex: none;
}
.tri.blue { border-top-color: #2b4a8a; margin-right: 10px; }
.t4 { margin: 36px 0 0 54px; }
.sol-scroll { width: 14px; }
.sol-scroll .thumb-bar { top: 114px; height: 91px; }
.only-installed {
    height: 20px;
    flex: none;
    margin-left: 9px;
    width: 205px;
    background: #eeeeee;
    display: flex;
    align-items: center;
    color: #555;
}
.checkbox {
    width: 13px;
    height: 13px;
    border: 1px solid #888;
    background: #fff;
    margin-right: 5px;
    flex: none;
}

/* library */
.library { width: 195px; }
.library .panel-head { padding-left: 6px; padding-right: 11px; height: 31px; }
.lib-nav {
    height: 21px;
    flex: none;
    display: flex;
    align-items: center;
    padding-left: 4px;
    margin-top: 1px;
}
.lib-nav svg { flex: none; margin-right: 3px; }
.lib-select {
    width: 160px;
    height: 20px;
    border: 1px solid #aaa;
    font-size: 13px;
    color: #666;
    line-height: 18px;
    padding-left: 4px;
    letter-spacing: .2px;
    position: relative;
    font-weight: 500;
}
.mini-drop {
    width: 0;
    height: 0;
    border: 3px solid transparent;
    border-top: 4px solid #444;
    position: absolute;
    right: 7px;
    top: 7px;
}
.lib-body { flex: 1; display: flex; min-height: 0; margin-top: 3px; }
.lib-list { width: 176px; height: 100%; overflow: hidden; flex: none; padding-top: 2px; }
.lib-item {
    height: 62px;
    margin-bottom: 2px;
    display: flex;
    align-items: center;
    padding-left: 2px;
    white-space: nowrap;
    overflow: hidden;
    flex: none;
}
.lib-item svg { flex: none; margin-right: 2px; overflow: visible; }
.lib-item.hot { background: #e3f1fc; }
.lib-big { font: 19px "DejaVu Sans", sans-serif; fill: #444; text-anchor: middle; }
.lib-scroll { width: 16px; }
.lib-scroll .thumb-bar { top: 16px; height: 195px; }

/* document */
.center { width: 836px; flex: none; border-right: 1px solid #d8d8d8; display: flex; flex-direction: column; }
.doc { height: 612px; flex: none; display: flex; border-top: 3px solid #fff; }
.canvas {
    width: 815px;
    flex: none;
    margin-left: 1px;
    background: #aebfbe;
    padding: 6px 4px 5px 4px;
}
.page {
    display: block;
    width: 807px;
    height: 598px;
    border: 1px solid #111;
    background: #fff;
}
.doc-scroll { width: 17px; background: #f0f0f0; }
.sq-btn {
    height: 17px;
    flex: none;
    border: 1px solid #bbb;
    background: #f4f4f4;
    position: relative;
}
.sq-btn.up::after, .sq-btn.down::after {
    content: "";
    position: absolute;
    left: 3px;
    border: 5px solid transparent;
}
.sq-btn.up::after { top: 0; border-bottom: 6px solid #999; }
.sq-btn.down::after { top: 4px; border-top: 6px solid #999; }
.doc-track {
    flex: none;
    height: 540px;
    margin: 17px 0 18px;
    background: #fff;
    border: 1px solid #bbb;
    display: block;
}
.actor { font: 18px Roboto, sans-serif; fill: #bdbdbd; text-anchor: middle; }
.link path { fill: none; stroke: #c8c8c8; stroke-width: 1.200; }
.link-head path { fill: #bbb; }
.node rect, .node path { fill: #e0e0e0; }
.node-text text { font: 10px Roboto, sans-serif; fill: #222; text-anchor: middle; }
.edge-text { font: 10px Roboto, sans-serif; fill: #222; }
.note path { fill: #cfe6ea; }
.note-text text { font: 9px Roboto, sans-serif; fill: #555; }
.sel-line { fill: none; stroke: #6cd070; stroke-width: 1.500; stroke-dasharray: 6 5; }
.sel-dot { fill: #ff6459; }
.sel-core { fill: #a33b35; }
.sel-ring { fill: none; stroke: #a33b35; }

/* page row */
.page-row {
    height: 21px;
    flex: none;
    display: flex;
    align-items: center;
    background: #f4f4f4;
    margin-left: 1px;
    padding-top: 1px;
    position: relative;
}
.page-list { margin-left: 20px; width: 54px; font-size: 11.500px; letter-spacing: -.3px; color: #111; flex: none; }
.chev {
    width: 6px;
    height: 6px;
    border-left: 1px solid #999;
    border-bottom: 1px solid #999;
    transform: rotate(45deg);
    flex: none;
}
.chev.right { transform: rotate(225deg); margin-left: 5px; }
.page-select {
    width: 164px;
    height: 19px;
    border: 1px solid #bbb;
    background: #fff;
    margin-left: 6px;
    line-height: 17px;
    padding-left: 3px;
    position: relative;
    font-size: 11px;
    letter-spacing: -.45px;
    color: #333;
    white-space: nowrap;
    overflow: hidden;
    flex: none;
}
.page-select span { display: block; width: 144px; overflow: hidden; }
.hs-btn {
    width: 16px;
    height: 19px;
    background: #fff;
    border: 1px solid #bbb;
    flex: none;
    margin-left: 8px;
    position: relative;
}
.hs-track + .hs-btn { margin-left: 13px; }
.ar-l, .ar-r {
    position: absolute;
    top: 3px;
    border: 5px solid transparent;
}
.ar-l { left: 0; border-right: 5px solid #555; }
.ar-r { left: 5px; border-left: 5px solid #555; }
.hs-track {
    width: 486px;
    height: 18px;
    margin-left: 14px;
    background: #fff;
    border: 1px solid #bbb;
    flex: none;
}
.hs-corner {
    width: 16px;
    height: 17px;
    flex: none;
    margin-left: 1px;
    border: 1px solid #bbb;
    background: #dfeaf5;
}

/* colors */
.colors { flex: 1; min-height: 0; overflow: hidden; }
.colors .panel-head { height: 39px; padding: 8px 10px 0 6px; }
.swatch-row { display: flex; padding-left: 3px; }
.swatches { display: block; flex: none; }
.swatch-scroll {
    width: 14px;
    height: 23px;
    margin: -2px 0 0 11px;
    background: #eee;
    flex: none;
    display: flex;
    flex-direction: column;
}
.swatch-scroll .arrow-up { margin-top: 6px; }
.swatch-scroll .arrow-down { margin: 1px auto 0; }

/* arrange */
.arrange { width: 349px; }
.arrange .panel-head { padding-left: 5px; padding-right: 8px; height: 32px; }
.arrange .panel-title { font-size: 16.500px; }
.arr-body { flex: 1; display: flex; min-height: 0; }
.arr-list { width: 332px; height: 100%; overflow: hidden; flex: none; padding-left: 14px; }
.arr-scroll { width: 16px; }
.arr-scroll .thumb-bar { top: 16px; height: 510px; }
.sec-head {
    height: 16px;
    display: flex;
    align-items: center;
    width: 305px;
    font-size: 12.500px;
    color: #111;
}
.sec-head b { margin-left: 11px; font-weight: 700; white-space: nowrap; }
.sec-head em {
    flex: 1;
    align-self: flex-end;
    height: 1px;
    background: #aaa;
}
.sec-head.first { margin-top: 3px; }
.sec-head.sub { margin: 7px 0 0 19px; width: 288px; }
.mt6 { margin-top: 6px; }
.mt8 { margin-top: 8px; }
.mt10 { margin-top: 10px; }
.mt14 { margin-top: 14px; }
.mt15 { margin-top: 15px; }
.mt16 { margin-top: 16px; }
.mt18 { margin-top: 18px; }
.mt19 { margin-top: 19px; }
.tools { display: flex; margin-left: 3px; }
.page-tools { margin-left: 21px; }
.tool {
    width: 48px;
    display: flex;
    flex-direction: column;
    align-items: center;
    flex: none;
    line-height: 14px;
    font-size: 11.500px;
    color: #222;
    white-space: nowrap;
}
.tool svg { margin-bottom: 7px; flex: none; }
.page-tools .tool svg { margin-bottom: 8px; }
.gray-ico path { fill: none; stroke: #aaa; }
.red { stroke: #e86a5e; fill: none; }
.dist-row { display: flex; margin: 5px 0 0 16px; }
.dist {
    width: 119px;
    height: 20px;
    border: 1px solid #ddd;
    display: flex;
    align-items: center;
    padding-left: 4px;
    font-size: 11px;
    color: #999;
    position: relative;
}
.dist span { margin-left: 5px; }
.dist.d2 { margin-left: 25px; width: 120px; }
.dist.d2 span { margin-left: 11px; }
.mini-drop.sep { right: 3px; border-top-color: #999; }
.mini-drop.sep::before {
    content: "";
    position: absolute;
    left: -9px;
    top: -10px;
    height: 14px;
    border-left: 1px solid #ccc;
}
.form-row { display: flex; align-items: center; height: 23px; padding-left: 15px; }
.form-row label { width: 49px; flex: none; color: #222; padding-bottom: 1px; margin-left: 1px; margin-right: -1px; }
.form-row label.lab-x { padding: 3px 0 0; }
.form-row label.lab-y { padding: 0 0 4px; }
.field {
    width: 56px;
    height: 23px;
    flex: none;
    border: 1px solid #aaa;
    line-height: 19px;
    padding-left: 5px;
    font-size: 11px;
    letter-spacing: -.1px;
    color: #222;
    white-space: nowrap;
    overflow: hidden;
}
.field.off { color: #999; border-color: #ddd; }
.field.second { margin-left: 22px; }
.field.clip { padding-right: 2px; }
.spin {
    width: 16px;
    height: 23px;
    margin-left: 2px;
    flex: none;
    display: flex;
    flex-direction: column;
    gap: 1px;
}
.spin .arrow-up, .spin .arrow-down {
    height: 11px;
    width: 16px;
    background: #eee;
    border: 1px solid #ddd;
    position: relative;
}
.spin .arrow-up::after, .spin .arrow-down::after {
    content: "";
    position: absolute;
    left: 3px;
    border: 4px solid transparent;
}
.spin .arrow-up::after { top: -3px; border-bottom: 4px solid #222; }
.spin .arrow-down::after { top: 3px; border-top: 4px solid #222; }
.spin.off .arrow-up::after { border-bottom-color: #aaa; }
.spin.off .arrow-down::after { border-top-color: #aaa; }
.checkbox.faint { margin-left: 22px; border-color: #ddd; background: #fafafa; margin-right: 3px; }
.lock { color: #999; font-size: 11px; letter-spacing: -.2px; }
.begin-end {
    display: flex;
    margin: 5px 0 0 0;
    height: 14px;
    line-height: 14px;
    font-size: 11.500px;
}
.begin-end span { width: 103px; text-align: center; flex: none; }
.begin-end span:first-child { margin-left: 39px; }
.pin-row { margin-top: 7px; height: 21px; }
.pin-select {
    width: 173px;
    height: 21px;
    border: 1px solid #aaa;
    line-height: 19px;
    padding-left: 3px;
    color: #999;
    position: relative;
    font-size: 12px;
}
.mini-drop.pale { border-top-color: #ccc; }
.rot-tools { margin-top: 12px; margin-left: 4px; }
.rot-tools .tool svg { margin-bottom: 7px; }
.tool.flip { justify-content: flex-start; padding-top: 4px; }

/* status bar */
.statusbar {
    height: 20px;
    flex: none;
    background: #d34a26;
    color: #f8e6df;
    display: flex;
    align-items: center;
    position: relative;
    font-size: 11.800px;
}
.statusbar span { padding-top: 1px; }
.st-ready { margin-left: 4px; width: 474px; flex: none; }
.st-mouse { width: 208px; flex: none; }
.st-size { width: 596px; flex: none; white-space: nowrap; }
.st-id { width: 67px; flex: none; }
.st-hand { flex: none; margin-right: 9px; }
.st-zoom { flex: none; margin-right: 5px; }
.st-fit {
    width: 24px;
    height: 20px;
    background: #f5b094;
    display: flex;
    align-items: center;
    justify-content: center;
    flex: none;
}
.st-slider { display: flex; align-items: center; width: 125px; margin-left: 5px; flex: none; }
.minus { width: 6px; height: 2px; background: #fff; flex: none; }
.track { width: 98px; height: 1px; background: #fff; margin-left: 5px; position: relative; flex: none; }
.track b { position: absolute; left: 37px; top: -5px; width: 3px; height: 11px; background: #fff; }
.plus { width: 8px; height: 8px; margin-left: 7px; flex: none; background: linear-gradient(#fff, #fff) center/8px 2px no-repeat, linear-gradient(#fff, #fff) center/2px 8px no-repeat; }
.st-pct { margin-left: 15px; }
```
